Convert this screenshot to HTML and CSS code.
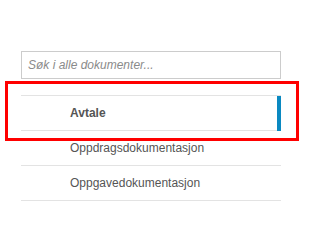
FILE: index.html
```html
<!DOCTYPE html>
<html lang="no">
<head>
<meta charset="utf-8">
<link rel="stylesheet" href="styles.css">
</head>
<body>
<div class="panel">
  <input class="search" type="text" placeholder="Søk i alle dokumenter...">
  <ul class="docs">
    <li class="doc active">Avtale</li>
    <li class="doc">Oppdragsdokumentasjon</li>
    <li class="doc">Oppgavedokumentasjon</li>
  </ul>
</div>
<div class="highlight"></div>
</body>
</html>
```
FILE: styles.css
```css
html, body {
  margin: 0;
  padding: 0;
  background: #fff;
}
body {
  font-family: "Liberation Sans", Arial, sans-serif;
  font-size: 12px;
  color: #555;
  position: relative;
  width: 314px;
  height: 244px;
  overflow: hidden;
}
.panel {
  padding: 51px 0 0 21px;
  width: 260px;
  display: flex;
  flex-direction: column;
  gap: 16px;
}
.search {
  box-sizing: border-box;
  width: 260px;
  height: 28px;
  margin: 0;
  border: 1px solid #ccc;
  border-radius: 0;
  padding: 0 6px;
  font-family: "Liberation Sans", Arial, sans-serif;
  font-size: 12px;
  color: #555;
  outline: none;
}
.search::placeholder {
  color: #8a8a8a;
  font-style: italic;
}
.docs {
  list-style: none;
  margin: 0;
  padding: 0;
  border-top: 1px solid #e3e3e3;
}
.doc {
  position: relative;
  height: 34px;
  line-height: 34px;
  padding-left: 49px;
  border-bottom: 1px solid #e3e3e3;
  color: #555;
}
.doc.active {
  font-weight: bold;
}
.doc.active::after {
  content: "";
  position: absolute;
  right: 0;
  top: 0;
  bottom: -1px;
  width: 4px;
  background: #0a89c1;
}
.highlight {
  position: absolute;
  left: 5px;
  top: 81px;
  width: 288px;
  height: 54px;
  border: 3px solid #ff0000;
}
```
